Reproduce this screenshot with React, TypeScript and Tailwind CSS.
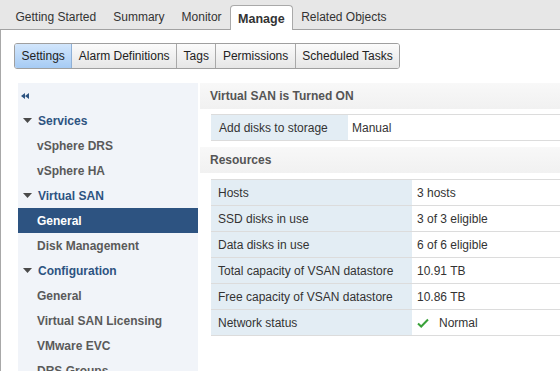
import React from 'react'

const topTabs = ['Getting Started', 'Summary', 'Monitor', 'Manage', 'Related Objects']
const subTabs = ['Settings', 'Alarm Definitions', 'Tags', 'Permissions', 'Scheduled Tasks']

type NavItem = { label: string; kind: 'group' | 'item'; active?: boolean }

const navItems: NavItem[] = [
    { label: 'Services', kind: 'group' },
    { label: 'vSphere DRS', kind: 'item' },
    { label: 'vSphere HA', kind: 'item' },
    { label: 'Virtual SAN', kind: 'group' },
    { label: 'General', kind: 'item', active: true },
    { label: 'Disk Management', kind: 'item' },
    { label: 'Configuration', kind: 'group' },
    { label: 'General', kind: 'item' },
    { label: 'Virtual SAN Licensing', kind: 'item' },
    { label: 'VMware EVC', kind: 'item' },
    { label: 'DRS Groups', kind: 'item' },
]

const resources = [
    ['Hosts', '3 hosts'],
    ['SSD disks in use', '3 of 3 eligible'],
    ['Data disks in use', '6 of 6 eligible'],
    ['Total capacity of VSAN datastore', '10.91 TB'],
    ['Free capacity of VSAN datastore', '10.86 TB'],
    ['Network status', 'Normal'],
]

const Caret = () => (
    <svg width="9" height="5" viewBox="0 0 9 5" className="mr-[6px] shrink-0">
        <path d="M0 0 L9 0 L4.5 5 Z" fill="#4a4a4a" />
    </svg>
)

const Check = () => (
    <svg width="12" height="10" viewBox="0 0 12 10" className="mr-[10px]">
        <path d="M1 5.5 L4.2 8.5 L11 1.5" fill="none" stroke="#3aa23a" strokeWidth="2" />
    </svg>
)

const SectionHeader = ({ title }: { title: string }) => (
    <div className="h-[26px] flex items-center pl-[10px] bg-gradient-to-b from-[#f8f8f8] to-[#f1f1f1] font-bold text-[#555]">
        {title}
    </div>
)

export default function App() {
    return (
        <div
            className="w-[560px] h-[371px] overflow-hidden bg-white text-[12px] text-[#333]"
            style={{ fontFamily: '"Liberation Sans", Arial, sans-serif' }}
        >
            <div className="h-[30px] bg-[#e7e7e7] border-b border-[#a2a2a2] flex items-end pl-[7px]">
                {topTabs.map((t) =>
                    t === 'Manage' ? (
                        <div
                            key={t}
                            className="h-[25px] -mb-px px-[7px] flex items-center pt-[2px] bg-white border border-b-0 border-[#a9a9a9] rounded-t-[4px] font-bold text-[12.5px] text-[#333]"
                        >
                            {t}
                        </div>
                    ) : (
                        <div key={t} className="h-[25px] px-[8.5px] pt-[1px] flex items-center text-[12px] text-[#333]">
                            {t}
                        </div>
                    )
                )}
            </div>

            <div className="h-[341px] border-l border-[#a8a8a8]">
                <div className="pt-[13px] pl-[13px]">
                    <div className="inline-flex h-[26px] rounded-[3px] border border-[#9f9f9f] overflow-hidden">
                        {subTabs.map((t, i) => (
                            <div
                                key={t}
                                className={
                                    i === 0
                                        ? 'px-[6.5px] flex items-center bg-gradient-to-b from-[#d2e6fc] to-[#a6cbf4] border-r border-[#8fb0d6] text-[#222]'
                                        : 'px-[6.5px] flex items-center bg-gradient-to-b from-[#fbfbfb] to-[#e6e6e6] border-r border-[#a8a8a8] last:border-r-0 text-[#222]'
                                }
                            >
                                {t}
                            </div>
                        ))}
                    </div>
                </div>

                <div className="flex mt-[14px] h-[300px]">
                    <div className="ml-[17px] w-[180px] bg-[#f1f4f9] font-bold">
                        <div className="h-[25px] flex items-center pl-[3px]">
                            <svg width="8" height="6" viewBox="0 0 8 6">
                                <path d="M0 3 L4 0 L4 6 Z M4 3 L8 0 L8 6 Z" fill="#2d5381" />
                            </svg>
                        </div>
                        {navItems.map((n, i) =>
                            n.kind === 'group' ? (
                                <div key={i} className="h-[25px] flex items-center pl-[5px] text-[#2d5381]">
                                    <Caret />
                                    {n.label}
                                </div>
                            ) : (
                                <div
                                    key={i}
                                    className={
                                        n.active
                                            ? 'h-[25px] flex items-center pl-[19px] bg-[#2d5381] text-white'
                                            : 'h-[25px] flex items-center pl-[19px] text-[#5a5a5a]'
                                    }
                                >
                                    {n.label}
                                </div>
                            )
                        )}
                    </div>

                    <div className="ml-[2px] flex-1">
                        <SectionHeader title="Virtual SAN is Turned ON" />
                        <div className="mt-[5px] ml-[11px] border-y border-[#dcdcdc] flex h-[27px]">
                            <div className="w-[137px] bg-[#e3edf4] flex items-center pl-[8px]">Add disks to storage</div>
                            <div className="flex-1 flex items-center pl-[4px]">Manual</div>
                        </div>
                        <div className="mt-[6px]">
                            <SectionHeader title="Resources" />
                        </div>
                        <div className="mt-[6px] ml-[11px] border-t border-[#dcdcdc]">
                            {resources.map(([k, v]) => (
                                <div key={k} className="flex h-[26px] border-b border-[#dcdcdc]">
                                    <div className="w-[201px] bg-[#e3edf4] flex items-center pl-[7px]">{k}</div>
                                    <div className="flex-1 flex items-center pl-[5px]">
                                        {k === 'Network status' && <Check />}
                                        {v}
                                    </div>
                                </div>
                            ))}
                        </div>
                    </div>
                </div>
            </div>
        </div>
    )
}
